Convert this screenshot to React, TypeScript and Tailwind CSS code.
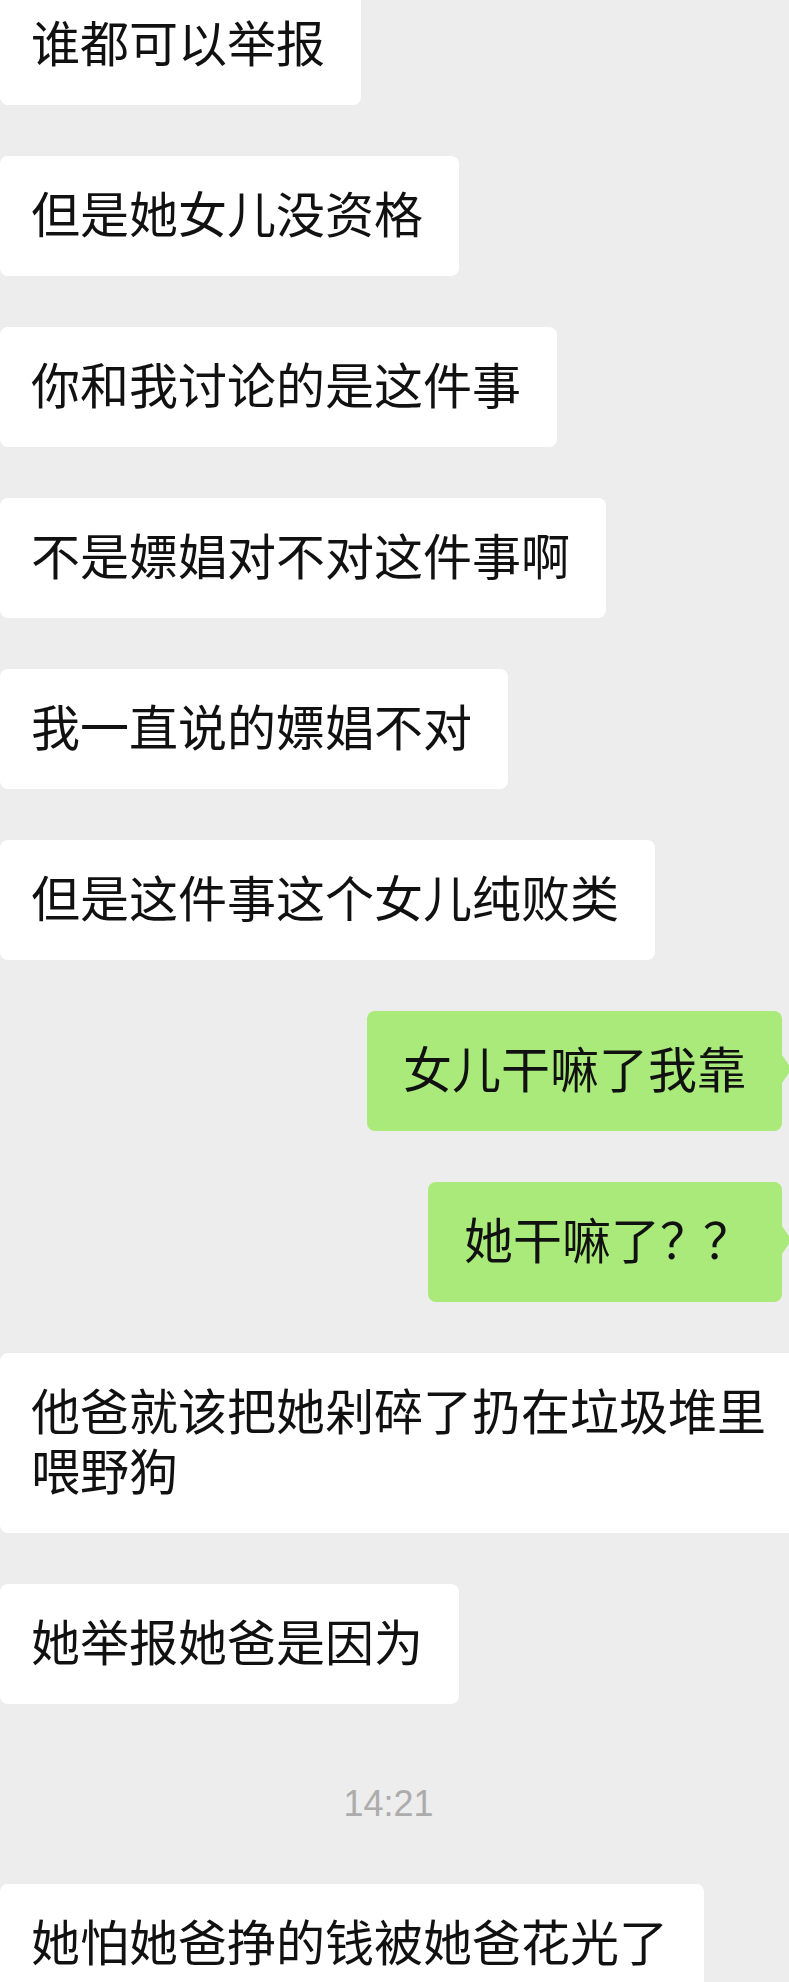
type Msg = { side: 'left' | 'right'; text: string }

const before: Msg[] = [
  { side: 'left', text: '谁都可以举报' },
  { side: 'left', text: '但是她女儿没资格' },
  { side: 'left', text: '你和我讨论的是这件事' },
  { side: 'left', text: '不是嫖娼对不对这件事啊' },
  { side: 'left', text: '我一直说的嫖娼不对' },
  { side: 'left', text: '但是这件事这个女儿纯败类' },
  { side: 'right', text: '女儿干嘛了我靠' },
  { side: 'right', text: '她干嘛了？？' },
  { side: 'left', text: '他爸就该把她剁碎了扔在垃圾堆里喂野狗' },
  { side: 'left', text: '她举报她爸是因为' },
]

const after: Msg[] = [{ side: 'left', text: '她怕她爸挣的钱被她爸花光了' }]

function Bubble({ msg }: { msg: Msg }) {
  if (msg.side === 'right') {
    const q = msg.text.endsWith('？？')
    return (
      <div className="flex justify-end pr-[7px]">
        <div className="relative shrink-0 rounded-[8px] bg-[#a9ea7a] pt-[26px] pb-[34px] pl-[36px] pr-[36px]">
          <p className="max-w-[740px] text-[49px] leading-[60px] text-[#111111]">
            {q ? (
              <>
                {msg.text.slice(0, -2)}
                <span className="tracking-[-6px]">？？</span>
              </>
            ) : (
              msg.text
            )}
          </p>
          <svg viewBox="0 0 10 28" className="absolute left-full top-[44px] h-[28px] w-[10px]">
            <path d="M0 0 L7.5 11 Q9.5 14 7.5 17 L0 28 Z" fill="#a9ea7a" />
          </svg>
        </div>
      </div>
    )
  }
  return (
    <div className="flex justify-start">
      <div className="shrink-0 rounded-[8px] bg-white pt-[26px] pb-[34px] pl-[31px] pr-[36px]">
        <p className="max-w-[740px] text-[49px] leading-[60px] text-[#111111]">{msg.text}</p>
      </div>
    </div>
  )
}

export default function App() {
  return (
    <div
      className="h-[1982px] w-[789px] overflow-hidden bg-[#ededed]"
      style={{ fontFamily: '"Noto Sans CJK SC", "Noto Sans", sans-serif' }}
    >
      <div className="-mt-[15px] flex flex-col gap-[51px]">
        {before.map((m, i) => (
          <Bubble key={i} msg={m} />
        ))}
      </div>
      <div className="mt-[75px] mb-[55px] pr-[12px] text-center text-[36px] leading-[50px] text-[#acacac] [font-family:'Liberation_Sans',Arial,sans-serif]">
        14:21
      </div>
      <div className="flex flex-col gap-[51px]">
        {after.map((m, i) => (
          <Bubble key={i} msg={m} />
        ))}
      </div>
    </div>
  )
}
